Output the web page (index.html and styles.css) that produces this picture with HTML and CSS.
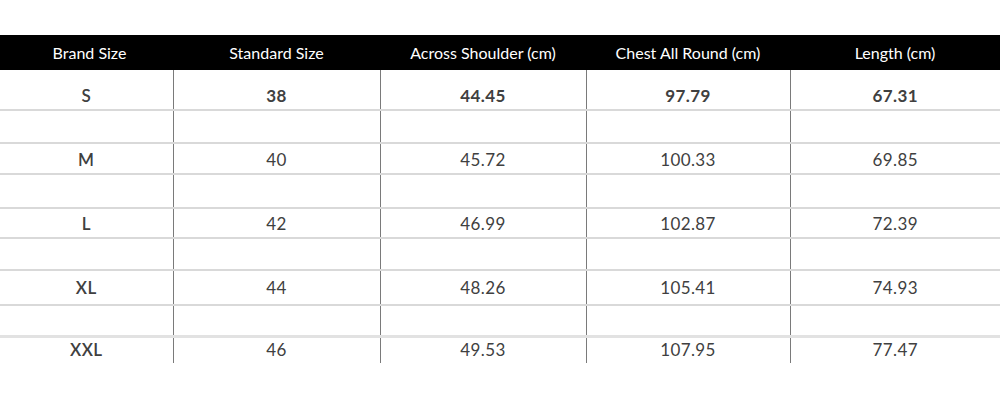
FILE: index.html
```html
<!DOCTYPE html>
<html>
<head>
<meta charset="utf-8">
<link rel="stylesheet" href="styles.css">
</head>
<body>
<table class="size-table">
  <colgroup>
    <col class="c1"><col class="c2"><col class="c3"><col class="c4"><col class="c5">
  </colgroup>
  <thead>
    <tr class="head">
      <th>Brand Size</th><th>Standard Size</th><th>Across Shoulder (cm)</th><th>Chest All Round (cm)</th><th>Length (cm)</th>
    </tr>
  </thead>
  <tbody>
    <tr class="data first bold"><td>S</td><td>38</td><td>44.45</td><td>97.79</td><td>67.31</td></tr>
    <tr class="gap g1"><td></td><td></td><td></td><td></td><td></td></tr>
    <tr class="data d2"><td>M</td><td>40</td><td>45.72</td><td>100.33</td><td>69.85</td></tr>
    <tr class="gap g2"><td></td><td></td><td></td><td></td><td></td></tr>
    <tr class="data d3"><td>L</td><td>42</td><td>46.99</td><td>102.87</td><td>72.39</td></tr>
    <tr class="gap g3"><td></td><td></td><td></td><td></td><td></td></tr>
    <tr class="data d4"><td>XL</td><td>44</td><td>48.26</td><td>105.41</td><td>74.93</td></tr>
    <tr class="gap g4"><td></td><td></td><td></td><td></td><td></td></tr>
    <tr class="data last"><td>XXL</td><td>46</td><td>49.53</td><td>107.95</td><td>77.47</td></tr>
  </tbody>
</table>
</body>
</html>
```

FILE: styles.css
```css
html, body {
  margin: 0;
  padding: 0;
  background: #fff;
}
body {
  padding-top: 35px;
  font-family: Lato, "Open Sans", sans-serif;
}
.size-table {
  width: 1000px;
  border-collapse: collapse;
  table-layout: fixed;
}
.c1 { width: 173px; }
.c2 { width: 207px; }
.c3 { width: 206px; }
.c4 { width: 204px; }
.c5 { width: 210px; }

.head th {
  background: #000;
  color: #fff;
  height: 35px;
  padding: 0;
  font-weight: 400;
  font-size: 16px;
  letter-spacing: 0;
  text-align: center;
  vertical-align: middle;
}
.head th:first-child { padding-left: 6px; }
.size-table td {
  padding: 0;
  text-align: center;
  color: #404040;
  font-size: 17px;
  line-height: 20px;
  letter-spacing: 0.4px;
  vertical-align: bottom;
  border-bottom: 2px solid #d9d9d9;
}
.size-table td + td {
  border-left: 1px solid #7a7a7a;
}
.size-table td:first-child { font-weight: 600; }
.data td { padding-bottom: 3px; }
.bold td { font-weight: 700; }

.first td { height: 36px; }
.g1 td { height: 31px; }
.d2 td { height: 26px; }
.g2 td { height: 32px; }
.d3 td { height: 25px; }
.g3 td { height: 30px; }
.d4 td { height: 27px; padding-bottom: 6px; }
.g4 td { height: 29px; border-bottom: 3px solid #e2e2e2; }
.last td { height: 22px; border-bottom: none; }
```
